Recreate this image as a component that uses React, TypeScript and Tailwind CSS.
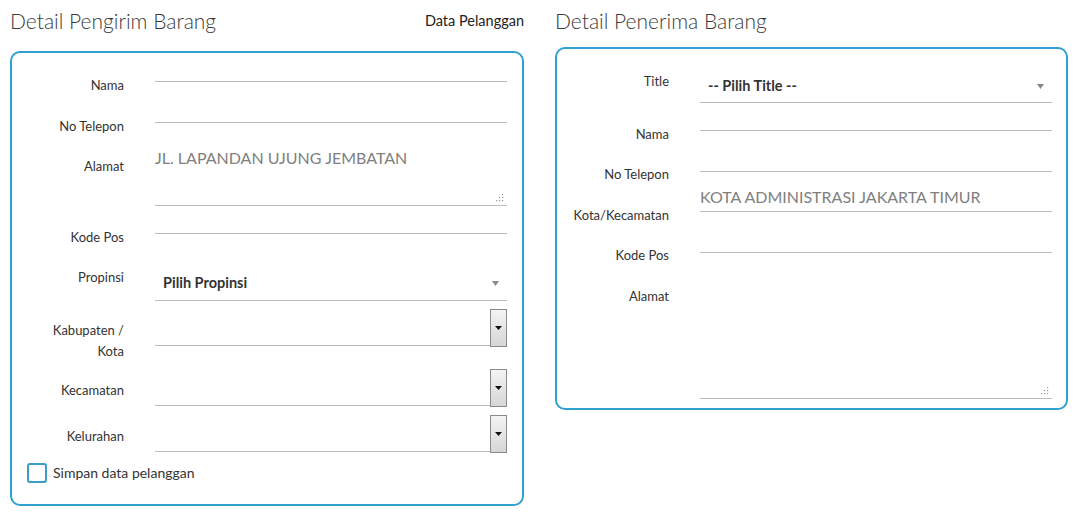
import React from "react";

const FONT = { fontFamily: "Lato, 'Noto Sans', sans-serif" };

function Grip() {
  return (
    <svg width="9" height="9" viewBox="0 0 9 9" className="absolute right-[3px] bottom-[3px]">
      {[
        [7, 1],
        [7, 4],
        [4, 4],
        [7, 7],
        [4, 7],
        [1, 7],
      ].map(([x, y], i) => (
        <rect key={i} x={x} y={y} width="1.2" height="1.2" fill="#9a9a9a" />
      ))}
    </svg>
  );
}

function Arrow() {
  return (
    <svg width="7" height="5" viewBox="0 0 7 5" className="shrink-0">
      <path d="M0 0 L7 0 L3.5 5 Z" fill="#8a8a8a" />
    </svg>
  );
}

function NativeBtn() {
  return (
    <div className="w-[17px] h-[38px] -mb-[1px] self-end shrink-0 border border-[#8a8a8a] bg-gradient-to-b from-[#f4f4f4] to-[#d6d6d6] flex items-center justify-center">
      <svg width="7" height="4" viewBox="0 0 7 4">
        <path d="M0 0 L7 0 L3.5 4 Z" fill="#111" />
      </svg>
    </div>
  );
}

type RowProps = {
  label: React.ReactNode;
  children?: React.ReactNode;
  hClass: string;
  ptClass: string;
};

function Row({ label, hClass, ptClass, children }: RowProps) {
  return (
    <div className={`flex ${hClass}`}>
      <div className={`w-[100px] shrink-0 text-right text-[13px] leading-[20px] text-[#333] ${ptClass}`}>{label}</div>
      <div className="w-[31px] shrink-0" />
      <div className="flex-1 flex min-w-0">{children}</div>
    </div>
  );
}

function Line({ children, className = "" }: { children?: React.ReactNode; className?: string }) {
  return <div className={`flex-1 border-b border-[#bdbdbd] relative ${className}`}>{children}</div>;
}

export default function App() {
  return (
    <div className="w-[1084px] h-[523px] bg-white text-[#333] flex gap-[31px] pl-[10px] pt-[8px]" style={FONT}>
      {/* Left column */}
      <div className="w-[514px] flex flex-col">
        <div className="flex items-center justify-between h-[26px]">
          <h2 className="text-[21px] font-light text-[#3a3a3a] leading-[26px]">Detail Pengirim Barang</h2>
          <span className="text-[14.5px] text-[#222]">Data Pelanggan</span>
        </div>
        <div className="mt-[17px] border-2 border-[#2fa0cf] rounded-[10px] pl-[12px] pr-[15px] flex flex-col">
          <Row label="Nama" hClass="h-[29px]" ptClass="pt-[22px]">
            <Line />
          </Row>
          <Row label="No Telepon" hClass="h-[41px]" ptClass="pt-[34px]">
            <Line />
          </Row>
          <Row label="Alamat" hClass="h-[83px]" ptClass="pt-[33px]">
            <Line>
              <div className="pt-[23px] text-[16px] leading-[24px] text-[#808080]">JL. LAPANDAN UJUNG JEMBATAN</div>
              <Grip />
            </Line>
          </Row>
          <Row label="Kode Pos" hClass="h-[28px]" ptClass="pt-[21px]">
            <Line />
          </Row>
          <Row label="Propinsi" hClass="h-[67px]" ptClass="pt-[33px]">
            <Line className="flex items-end pb-[7px] pl-[8px] pr-[8px]">
              <span className="flex-1 text-[14.5px] leading-[20px] font-bold text-[#333]">Pilih Propinsi</span>
              <div className="mb-[7px]">
                <Arrow />
              </div>
            </Line>
          </Row>
          <Row
            label={
              <span className="leading-[21px] block">
                Kabupaten /<br />Kota
              </span>
            }
            hClass="h-[45px]"
            ptClass="pt-[19px]"
          >
            <Line />
            <NativeBtn />
          </Row>
          <Row label="Kecamatan" hClass="h-[60px]" ptClass="pt-[34px]">
            <Line />
            <NativeBtn />
          </Row>
          <Row label="Kelurahan" hClass="h-[46px]" ptClass="pt-[20px]">
            <Line />
            <NativeBtn />
          </Row>
          <div className="h-[52px] pl-[3px] pt-[11px] flex items-start gap-[6px]">
            <div className="w-[20px] h-[20px] border-2 border-[#3b9dc4] rounded-[3px] shrink-0" />
            <span className="text-[14px] leading-[20px] text-[#333]">Simpan data pelanggan</span>
          </div>
        </div>
      </div>

      {/* Right column */}
      <div className="w-[513px] flex flex-col">
        <div className="flex items-center h-[26px]">
          <h2 className="text-[21px] font-light text-[#3a3a3a] leading-[26px]">Detail Penerima Barang</h2>
        </div>
        <div className="mt-[13px] border-2 border-[#2fa0cf] rounded-[10px] pl-[12px] pr-[14px] pb-[9px] flex flex-col">
          <Row label="Title" hClass="h-[54px]" ptClass="pt-[22px]">
            <Line className="flex items-end pb-[6px] pl-[8px] pr-[8px]">
              <span className="flex-1 text-[14.5px] leading-[20px] font-bold text-[#333]">-- Pilih Title --</span>
              <div className="mb-[7px]">
                <Arrow />
              </div>
            </Line>
          </Row>
          <Row label="Nama" hClass="h-[28px]" ptClass="pt-[21px]">
            <Line />
          </Row>
          <Row label="No Telepon" hClass="h-[41px]" ptClass="pt-[33px]">
            <Line />
          </Row>
          <Row label="Kota/Kecamatan" hClass="h-[40px]" ptClass="pt-[33px]">
            <Line className="flex items-end pb-[2px]">
              <span className="text-[16px] leading-[24px] text-[#808080]">KOTA ADMINISTRASI JAKARTA TIMUR</span>
            </Line>
          </Row>
          <Row label="Kode Pos" hClass="h-[41px]" ptClass="pt-[33px]">
            <Line />
          </Row>
          <Row label="Alamat" hClass="h-[146px]" ptClass="pt-[33px]">
            <Line>
              <Grip />
            </Line>
          </Row>
        </div>
      </div>
    </div>
  );
}
